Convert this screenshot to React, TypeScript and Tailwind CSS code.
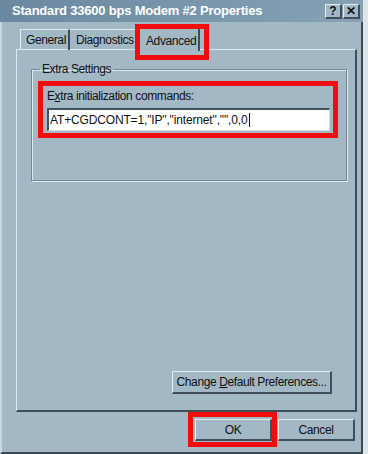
import React from "react";

const font = "font-['Liberation_Sans',Arial,sans-serif]";

function Bevel({ children, className = "" }: { children?: React.ReactNode; className?: string }) {
  return (
    <div
      className={`flex items-center justify-center bg-[#a3b8c5] border-t border-l border-t-[#e3ecf1] border-l-[#e3ecf1] border-r-2 border-b-2 border-r-[#3f4e59] border-b-[#3f4e59] ${className}`}
    >
      <span className="whitespace-nowrap">{children}</span>
    </div>
  );
}

export default function App() {
  return (
    <div className={`w-[368px] h-[454px] bg-[#dde5ea] flex flex-col text-[12px] text-[#111] tracking-[-0.4px] ${font}`}>
      {/* Title bar */}
      <div className="w-[363px] h-[22px] shrink-0 bg-gradient-to-r from-[#6a88a0] to-[#87a2b5] flex items-center pl-[12px] pr-[3px] tracking-[-0.2px]">
        <span className="text-white font-bold text-[13px] flex-1">Standard 33600 bps Modem #2 Properties</span>
        <div className="flex gap-[1px] tracking-normal">
          <Bevel className="w-[17px] h-[15px] text-[12px] font-bold leading-none">?</Bevel>
          <Bevel className="w-[17px] h-[15px] text-[12px] font-bold leading-none">✕</Bevel>
        </div>
      </div>

      {/* Body */}
      <div className="w-[363px] flex-1 bg-[#a3b8c5] border-l-2 border-l-[#c9d6de] border-r-2 border-r-[#3a4853] border-b-2 border-b-[#3a4853] flex flex-col">
        {/* Tabs */}
        <div className="h-[27px] shrink-0 flex items-end pl-[18px] relative z-10">
          <div className="h-[21px] w-[50px] pl-[5px] flex items-center border-t border-l border-t-[#e3ecf1] border-l-[#e3ecf1] border-r-2 border-r-[#3f4e59] mb-[-1px]">
            General
          </div>
          <div className="h-[21px] w-[67px] pl-[6px] flex items-center border-t border-t-[#e3ecf1] mb-[-1px]">
            Diagnostics
          </div>
          <div className="relative h-[24px] w-[63px] flex items-start pt-[4px] pl-[8px] bg-[#a3b8c5] border-t border-l border-t-[#e3ecf1] border-l-[#e3ecf1] border-r-2 border-r-[#3f4e59] mb-[-2px]">
            Advanced
            <div className="absolute -left-[3px] -top-[4px] w-[74px] h-[36px] border-[5px] border-[#f20c0c]" />
          </div>
        </div>

        {/* Panel */}
        <div className="ml-[14px] w-[341px] h-[363px] shrink-0 border-t border-l border-t-[#dfe8ee] border-l-[#dfe8ee] border-r-2 border-b-2 border-r-[#3f4e59] border-b-[#3f4e59] flex flex-col">
          <fieldset className="ml-[14px] mt-[12px] w-[316px] h-[119px] border border-[#73889a] shadow-[inset_1px_1px_0_#dfe8ee,1px_1px_0_#dfe8ee] px-[6px] pb-0">
            <legend className="ml-[2px] px-[2px] leading-[14px]">Extra Settings</legend>
            <div className="mt-[5px] w-[300px] h-[57px] border-[5px] border-[#f20c0c] pl-[4px] pt-[2px] flex flex-col">
              <div className="leading-[16px]">
                E<span className="underline">x</span>tra initialization commands:
              </div>
              <div className="mt-[4px] w-[283px] h-[23px] bg-white border-t-2 border-l-2 border-t-[#43525d] border-l-[#43525d] border-r border-b border-r-[#d3dee5] border-b-[#d3dee5] flex items-center pl-[1px] tracking-[-0.15px]">
                AT+CGDCONT=1,"IP","internet","",0,0<span className="inline-block w-[1px] h-[14px] bg-black ml-[1px]" />
              </div>
            </div>
          </fieldset>
          <div className="flex-1" />
          <div className="flex justify-end mr-[23px] mb-[16px]">
            <Bevel className="w-[160px] h-[23px]">
              Change <span className="underline">D</span>efault Preferences...
            </Bevel>
          </div>
        </div>

        {/* Buttons */}
        <div className="flex justify-end gap-[6px] mt-[7px] mr-[6px]">
          <div className="relative">
            <Bevel className="w-[77px] h-[22px] border-r-[#1f2a32] border-b-[#1f2a32]">OK</Bevel>
            <div className="absolute -left-[7px] -top-[7px] w-[89px] h-[35px] border-[5px] border-[#f20c0c]" />
          </div>
          <Bevel className="w-[77px] h-[22px]">Cancel</Bevel>
        </div>
      </div>
    </div>
  );
}
